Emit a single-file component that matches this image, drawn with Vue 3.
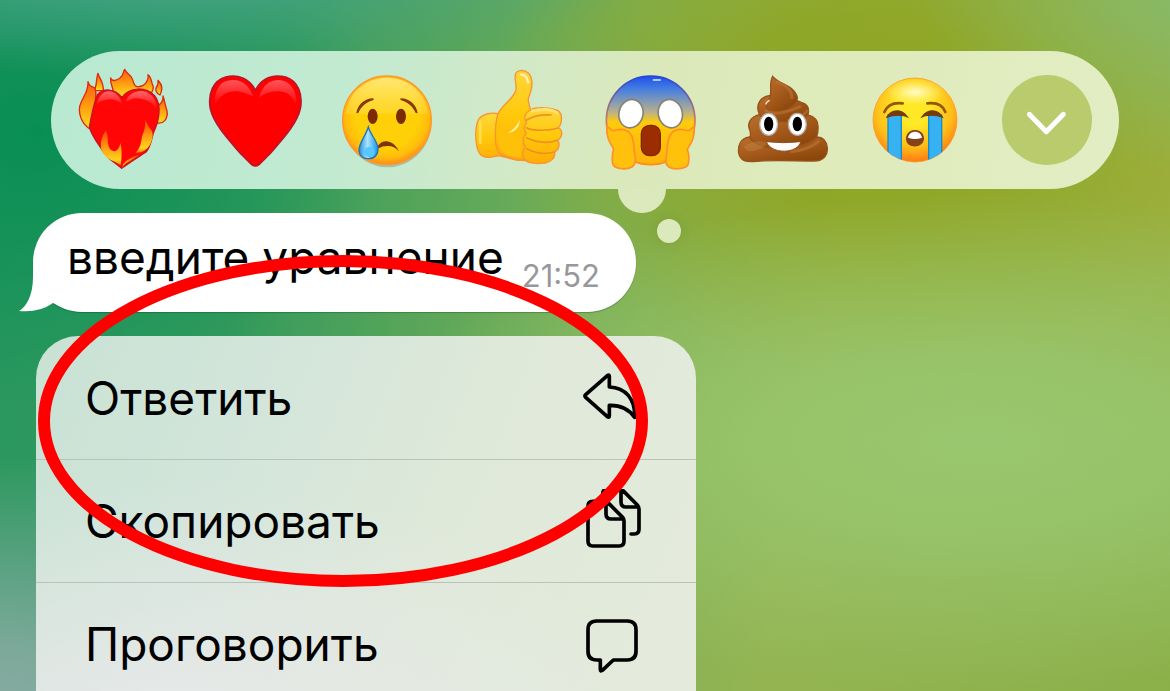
<script setup>
const menu = [
  { id: 'reply', label: 'Ответить' },
  { id: 'copy', label: 'Скопировать' },
  { id: 'speak', label: 'Проговорить' },
]
</script>

<template>
  <main class="chat">
    <div class="reactions" role="toolbar" aria-label="Реакции">
      <button class="reaction" type="button" aria-label="Сердце в огне">
        <svg viewBox="45 60 288 300" aria-hidden="true">
          <defs>
            <linearGradient id="flame" x1="0" y1="0" x2="0" y2="1">
              <stop offset="0" stop-color="#ff5a12" />
              <stop offset=".5" stop-color="#ff9a10" />
              <stop offset="1" stop-color="#ffdf20" />
            </linearGradient>
            <linearGradient id="lowFlame" x1="0" y1="0" x2="0" y2="1">
              <stop offset="0" stop-color="#ff3b08" />
              <stop offset=".45" stop-color="#ff9410" />
              <stop offset=".85" stop-color="#ffd51c" />
              <stop offset="1" stop-color="#ff7a10" />
            </linearGradient>
            <linearGradient id="gloss" x1="0" y1="0" x2="0" y2="1">
              <stop offset="0" stop-color="#ff8c95" />
              <stop offset="1" stop-color="#ff0000" />
            </linearGradient>
          </defs>
          <g fill="url(#flame)" stroke="#dc2a12" stroke-width="4" stroke-linejoin="round">
            <path d="M102 122C112 108 107 88 114 70C117 84 131 95 130 122Z" />
            <path d="M152 84C156 96 169 92 180 84C192 76 188 66 194 58C199 72 212 72 217 87C223 100 220 107 231 110C252 113 267 93 264 74C278 85 272 99 280 110C280 126 269 135 258 140L160 140C165 119 149 104 152 84Z" />
            <path d="M294 91C310 107 307 120 300 135C288 130 285 120 289 112C294 106 296 103 294 91Z" />
            <path d="M309 138C315 154 315 166 321 182C325 207 310 222 293 219L288 170C302 164 311 156 309 138Z" />
            <path d="M84 95C88 112 99 110 104 114C113 128 104 139 107 154L90 237C68 223 55 197 59 169C66 142 86 128 84 95Z" />
          </g>
          <path d="M186 143C164 113 130 115 112 134C103 158 94 196 88 232C98 262 112 278 124 296C136 322 160 334 185 355C204 340 240 318 258 306C272 292 274 270 280 249C295 217 308 168 284 137C257 110 208 109 186 143Z" fill="#ff0505" stroke="#c51522" stroke-width="4" />
          <path d="M111 162C115 132 139 116 160 127C177 135 184 151 186 162C179 153 152 144 135 150C123 152 114 158 111 162ZM197 155C206 128 239 116 263 128C288 141 291 163 290 180C279 151 237 141 218 146Z" fill="url(#gloss)" opacity=".7" />
          <g fill="url(#lowFlame)">
            <path d="M138 240C123 262 118 288 127 306C138 328 163 332 182 346C185 326 187 300 181 279C177 300 166 308 154 301C138 286 148 264 138 240Z" />
            <path d="M254 208C260 236 246 252 245 266C242 288 236 298 227 308C243 310 262 300 271 282C278 268 280 256 276 243C268 236 262 220 254 208Z" />
            <path d="M186 354C192 338 216 332 238 314C222 318 202 326 190 342Z" />
          </g>
        </svg>
      </button>

      <button class="reaction" type="button" aria-label="Сердце">
        <svg viewBox="438 60 288 300" aria-hidden="true">
          <path d="M583 121C565 84 530 73 494 81C456 92 440 131 448 176C458 222 502 268 540 312L572 344Q583 352 594 344L626 312C664 268 708 222 718 176C726 132 711 93 674 81C635 73 602 85 583 121Z" fill="#ff0000" stroke="#b9152d" stroke-width="5" />
          <path d="M462 166C458 119 479 89 516 90C548 90 568 112 576 139C547 125 525 119 503 127C479 135 471 150 462 166ZM594 144C603 105 628 89 655 90C691 94 711 126 704 167C696 141 682 126 655 124C631 121 608 132 594 144Z" fill="url(#gloss)" opacity=".6" />
        </svg>
      </button>

      <button class="reaction" type="button" aria-label="Грусть">
        <svg viewBox="57 60 288 300" aria-hidden="true">
          <defs>
            <radialGradient id="face" cx=".5" cy=".45" r=".55">
              <stop offset=".65" stop-color="#ffd008" />
              <stop offset=".86" stop-color="#ffbc0a" />
              <stop offset="1" stop-color="#ff8a1c" />
            </radialGradient>
            <linearGradient id="shine" x1="0" y1="0" x2="0" y2="1">
              <stop offset="0" stop-color="#fff3a0" />
              <stop offset="1" stop-color="#ffe66c" stop-opacity=".4" />
            </linearGradient>
            <linearGradient id="tear" x1="0" y1="0" x2="1" y2="0">
              <stop offset="0" stop-color="#278ed5" />
              <stop offset=".45" stop-color="#aae4ff" />
              <stop offset="1" stop-color="#1496e8" />
            </linearGradient>
          </defs>
          <ellipse cx="203" cy="219" rx="130" ry="133" fill="#8ba995" opacity=".6" />
          <circle cx="201" cy="211" r="133" fill="url(#face)" stroke="#ff982b" stroke-width="4" />
          <path d="M79 191C83 126 140 83 201 83C263 83 319 127 323 191Z" fill="url(#shine)" opacity=".7" />
          <path d="M109 190C112 166 132 145 160 145L161 150C141 155 124 168 115 189ZM293 190C290 166 270 145 242 145L241 150C261 155 278 168 287 189Z" fill="#8b3907" />
          <ellipse cx="158" cy="199" rx="15" ry="23" fill="#7b2b03" />
          <ellipse cx="243" cy="199" rx="15" ry="23" fill="#7b2b03" />
          <path d="M172 290C188 264 221 269 237 304Q222 287 202 288Q187 288 176 295Z" fill="#813307" />
          <path d="M145 231C138 257 116 279 117 302C119 319 131 327 146 326C164 326 175 313 174 294C172 272 151 254 145 231Z" fill="url(#tear)" stroke="#1c75ba" stroke-width="4" />
          <ellipse cx="148" cy="306" rx="16" ry="15" fill="#55c9ff" />
        </svg>
      </button>

      <button class="reaction" type="button" aria-label="Нравится">
        <svg viewBox="453 60 288 300" aria-hidden="true">
          <defs>
            <linearGradient id="hand" x1="0" y1="0" x2="0" y2="1">
              <stop offset="0" stop-color="#ffd63c" />
              <stop offset=".5" stop-color="#ffc90a" />
              <stop offset="1" stop-color="#ffac07" />
            </linearGradient>
          </defs>
          <g fill="url(#hand)" stroke="#f89432" stroke-width="4" stroke-linejoin="round">
            <path d="M533 191C518 187 489 190 476 208C463 232 465 292 480 312C496 329 518 320 535 317L590 330L643 333L636 215L550 214Z" />
            <path d="M586 75C587 61 610 56 625 69C645 91 633 126 625 145C624 158 628 169 634 184L625 330L591 330C562 318 536 318 532 298C522 276 526 222 532 197C540 168 582 147 588 120C590 103 583 87 586 75Z" />
            <path d="M632 180C651 169 696 173 714 182C730 193 726 224 714 233C730 241 729 262 711 271C721 277 719 298 704 306C707 323 692 337 675 339C649 342 619 342 611 323C604 308 612 297 616 290C604 274 612 257 619 250C607 235 616 223 620 219C608 199 618 187 632 180Z" />
          </g>
          <path d="M534 224C532 262 530 296 560 316L604 322L606 250L560 250Z" fill="#ffc00a" />
          <path d="M620 210Q649 192 693 195M619 233C637 244 690 242 713 234M620 264C647 277 687 282 711 271M620 296C648 311 678 313 704 306" fill="none" stroke="#ed9220" stroke-width="5" stroke-linecap="round" />
          <path d="M637 183Q691 172 711 189" fill="none" stroke="#ffe36e" stroke-width="9" stroke-linecap="round" />
          <path d="M563 248Q585 238 600 209L596 227Q582 250 563 248Z" fill="#fff0a0" />
          <path d="M604 73Q621 75 624 97" fill="none" stroke="#fff1b6" stroke-width="7" stroke-linecap="round" />
          <path d="M481 215L481 278" stroke="#ffdf4f" stroke-width="8" stroke-linecap="round" />
        </svg>
      </button>

      <button class="reaction" type="button" aria-label="Ужас">
        <svg viewBox="39 60 288 300" aria-hidden="true">
          <defs>
            <linearGradient id="scream" x1="0" y1="0" x2="0" y2="1">
              <stop offset="0" stop-color="#1d50ed" />
              <stop offset=".15" stop-color="#477fdf" />
              <stop offset=".4" stop-color="#b5af91" />
              <stop offset=".52" stop-color="#ffcb0c" />
              <stop offset="1" stop-color="#ffb30a" />
            </linearGradient>
            <linearGradient id="screamEdge" x1="0" y1="0" x2="0" y2="1">
              <stop offset="0" stop-color="#2644d8" />
              <stop offset=".55" stop-color="#d88252" />
              <stop offset="1" stop-color="#ff8c17" />
            </linearGradient>
          </defs>
          <circle cx="182" cy="211" r="133" fill="url(#scream)" stroke="url(#screamEdge)" stroke-width="5" />
          <ellipse cx="123" cy="191" rx="36" ry="43" fill="#fff" stroke="#878374" stroke-width="5" transform="rotate(15 123 191)" />
          <ellipse cx="241" cy="191" rx="36" ry="43" fill="#fff" stroke="#878374" stroke-width="5" transform="rotate(-15 241 191)" />
          <rect x="154" y="226" width="57" height="91" rx="25" fill="#9b2d00" stroke="#812700" stroke-width="4" />
          <g fill="#ffc10c" stroke="#ff8f27" stroke-width="5">
            <path d="M51 230C47 258 59 277 71 297C65 312 66 339 70 346C82 358 110 360 127 350C144 336 133 317 133 303C131 269 127 237 91 238C76 240 66 247 59 235Z" />
            <path d="M312 230C316 258 305 278 292 298C299 313 297 339 293 346C280 358 252 360 235 350C220 337 231 317 231 303C233 269 237 237 273 238C288 240 298 247 305 235Z" />
          </g>
          <path d="M190 90H211" stroke="#d4eeff" stroke-width="4" stroke-linecap="round" />
        </svg>
      </button>

      <button class="reaction" type="button" aria-label="Какашка">
        <svg viewBox="435 60 288 300" aria-hidden="true">
          <defs>
            <linearGradient id="brown" x1="0" y1="0" x2=".7" y2="1">
              <stop offset="0" stop-color="#b9702c" />
              <stop offset=".5" stop-color="#a65b1c" />
              <stop offset="1" stop-color="#8a4509" />
            </linearGradient>
          </defs>
          <g fill="url(#brown)" stroke="#96511c" stroke-width="4">
            <path d="M478 261C452 265 443 285 446 309C451 336 473 337 500 334C549 329 611 333 672 333C702 333 714 314 712 293C709 273 698 261 681 261Z" />
            <path d="M508 194C482 200 469 221 480 242C483 253 480 260 481 266C525 312 639 300 680 260C686 243 687 214 674 205C666 197 656 196 649 194Z" />
            <path d="M541 136C511 139 499 163 505 184C509 202 527 212 557 214C602 218 639 211 654 194C660 171 649 160 634 157L619 151Z" />
            <path d="M548 79C565 103 612 104 622 142C624 158 600 178 570 187C540 194 519 174 536 151C550 130 534 103 548 79Z" />
          </g>
          <path d="M558 95Q607 109 606 147M524 181Q555 202 633 169M652 180Q641 204 592 213M688 273Q652 302 601 305" fill="none" stroke="#c17a3d" stroke-width="9" opacity=".5" />
          <path d="M461 290Q499 266 534 278Q509 308 471 302Z" fill="#d29457" opacity=".3" />
          <ellipse cx="536" cy="223" rx="27" ry="33" fill="#fff" stroke="#b4ada8" stroke-width="4" />
          <ellipse cx="622" cy="223" rx="27" ry="33" fill="#fff" stroke="#b4ada8" stroke-width="4" />
          <ellipse cx="536" cy="222" rx="14" ry="22" />
          <ellipse cx="622" cy="222" rx="14" ry="22" />
          <path d="M529 275Q580 281 632 275C625 311 544 315 529 275Z" fill="#fff" stroke="#8f4e20" stroke-width="3" />
          <path d="M527 163Q530 155 539 151" fill="none" stroke="#f2d0ac" stroke-width="5" />
        </svg>
      </button>

      <button class="reaction" type="button" aria-label="Плач">
        <svg viewBox="51 90 288 300" aria-hidden="true">
          <defs>
            <radialGradient id="cry" cx=".48" cy=".36" r=".66">
              <stop offset=".3" stop-color="#ffe926" />
              <stop offset=".7" stop-color="#ffbd18" />
              <stop offset="1" stop-color="#ff7413" />
            </radialGradient>
            <radialGradient id="cryShine">
              <stop offset="0" stop-color="#fffbd0" />
              <stop offset="1" stop-color="#fff27a" stop-opacity="0" />
            </radialGradient>
            <clipPath id="cryClip"><circle cx="195" cy="240" r="126" /></clipPath>
          </defs>
          <circle cx="195" cy="240" r="126" fill="url(#cry)" stroke="#ff8d17" stroke-width="2" />
          <ellipse cx="195" cy="156" rx="92" ry="40" fill="url(#cryShine)" />
          <g clip-path="url(#cryClip)" fill="#36b1f2" stroke="#168acb" stroke-width="4">
            <path d="M114 225H154V370H114ZM236 225H275V370H236Z" />
          </g>
          <path d="M103 216Q116 185 158 190M232 190Q275 185 286 216" fill="none" stroke="#985408" stroke-width="8" stroke-linecap="round" />
          <path d="M107 235C120 204 158 201 177 235C159 225 133 225 107 235ZM211 235C230 201 268 204 281 235C255 225 230 225 211 235Z" fill="#763b09" />
          <path d="M168 294C171 262 219 262 222 294C223 327 166 329 168 294Z" fill="#854118" />
          <path d="M174 293C178 269 212 269 216 293Q195 301 174 293Z" fill="#fff" />
        </svg>
      </button>

      <button class="reaction" type="button" aria-label="Ещё">
        <svg viewBox="447 90 288 300" aria-hidden="true">
          <circle cx="591" cy="240" r="135" fill="#bacb6e" />
          <path d="M538 223L589 275L640 223" fill="none" stroke="#fff" stroke-width="15" stroke-linecap="round" stroke-linejoin="round" />
        </svg>
      </button>
      <span class="drop large"></span>
      <span class="drop small"></span>
    </div>

    <article class="message">
      <svg class="tail" viewBox="0 0 60 50" aria-hidden="true">
        <path d="M14 0V15C14 34 7 45 0 49Q20 51 34 41L60 49V0Z" fill="#fff" />
      </svg>
      <p class="text">введите уравнение</p>
      <time class="time">21:52</time>
    </article>

    <ul class="menu">
      <li v-for="item in menu" :key="item.id" class="entry">
        <button class="action" type="button">
          <span>{{ item.label }}</span>
          <svg v-if="item.id === 'reply'" class="icon" viewBox="96 78 192 192" aria-hidden="true">
            <path d="M173 106Q178 103 178 110V141C226 143 256 176 254 232C235 205 212 195 178 196V227Q178 234 172 230L107 172Q103 168 107 164Z" />
          </svg>
          <svg v-else-if="item.id === 'copy'" class="icon" viewBox="96 447 192 192" aria-hidden="true">
            <path d="M128 484H165Q170 484 174 488L218 532Q222 536 222 543V604Q222 618 208 618H128Q114 618 114 604V498Q114 484 128 484ZM168 488V522Q168 537 183 537H220" />
            <path d="M158 480V462Q158 448 172 448H209Q215 448 219 452L262 495Q267 500 267 507V568Q267 582 253 582H243M213 450V486Q213 501 228 501H265" />
          </svg>
          <svg v-else class="icon" viewBox="96 816 192 192" aria-hidden="true">
            <path d="M140 843H232Q258 843 258 869V934Q258 960 232 960H190L157 991Q151 995 151 988V960H140Q114 960 114 934V869Q114 843 140 843Z" />
          </svg>
        </button>
      </li>
    </ul>

    <svg class="marker" viewBox="0 0 612 334" aria-hidden="true">
      <ellipse cx="306" cy="167" rx="299" ry="160" fill="none" stroke="#ff0000" stroke-width="12" />
    </svg>
  </main>
</template>

<style>
body {
  margin: 0;
}
</style>

<style scoped>
.chat {
  position: relative;
  box-sizing: border-box;
  height: 100vh;
  overflow: hidden;
  padding: 51px 51px 0 33px;
  font-family: Inter, "Liberation Sans", sans-serif;
  color: #000;
  background:
    radial-gradient(ellipse 24% 42% at 0% 108%, #8fada8 0%, rgba(143, 173, 168, 0.8) 35%, transparent 100%),
    radial-gradient(ellipse 52% 36% at 84% 64%, #99c76f 0%, rgba(153, 199, 111, 0.8) 35%, rgba(153, 199, 111, 0) 100%),
    radial-gradient(ellipse 28% 30% at 106% -4%, #85bc72 0%, rgba(133, 188, 114, 0) 100%),
    radial-gradient(ellipse 44% 16% at 12% -5%, #4ba68c 0%, rgba(75, 166, 140, 0) 100%),
    radial-gradient(ellipse 32% 40% at 74% 16%, #8fa522 0%, rgba(143, 165, 34, 0.85) 35%, rgba(143, 165, 34, 0) 100%),
    radial-gradient(ellipse 34% 45% at 102% 24%, #a0b03e 0%, rgba(160, 176, 62, 0) 100%),
    radial-gradient(ellipse 30% 40% at 3% 19%, #088e54 0%, rgba(8, 142, 84, 0) 100%),
    linear-gradient(100deg, #289760 0%, #339a5c 22%, #7bb058 50%, #94b452 68%, #8bb04a 100%);
}

.reactions {
  position: relative;
  display: flex;
  align-items: center;
  justify-content: space-between;
  box-sizing: border-box;
  margin-left: 18px;
  padding: 19px 24px;
  border-radius: 69px;
  background: linear-gradient(100deg, #b8e9d1 0%, #c2ead1 28%, #d1e9c8 42%, #dbe9ba 56%, #dfebbb 75%, #e3edc4 100%);
}

.reaction {
  width: 96px;
  height: 100px;
  padding: 0;
  border: 0;
  background: none;
}

.reaction svg {
  display: block;
  width: 100%;
  height: 100%;
  overflow: visible;
}

.drop {
  position: absolute;
  background: #dce9bd;
}

.drop.large {
  top: 100%;
  left: 567px;
  width: 48px;
  height: 24px;
  border-radius: 0 0 24px 24px;
}

.drop.small {
  top: 168px;
  left: 606px;
  width: 24px;
  height: 24px;
  border-radius: 50%;
  box-shadow: 0 0 12px rgba(60, 90, 20, 0.15);
}

.message {
  position: relative;
  display: flex;
  align-items: center;
  justify-content: space-between;
  box-sizing: border-box;
  width: 603px;
  max-width: 100%;
  height: 99px;
  margin-top: 24px;
  padding: 0 36px 0 34px;
  border-radius: 49px;
  background: #fff;
  box-shadow: 0 1px 1px rgba(0, 50, 20, 0.3);
}

.tail {
  position: absolute;
  left: -14px;
  bottom: 0;
  width: 60px;
  height: 50px;
}

.text {
  position: relative;
  margin: 0;
  padding-bottom: 12px;
  font-size: 46px;
  line-height: 56px;
  white-space: nowrap;
}

.time {
  align-self: flex-end;
  padding-bottom: 16px;
  font-size: 31px;
  line-height: 40px;
  color: #98989c;
}

.menu {
  box-sizing: border-box;
  width: 660px;
  max-width: 100%;
  margin: 24px 0 0 3px;
  padding: 0 0 42px;
  overflow: hidden;
  list-style: none;
  border-radius: 42px;
  background:
    radial-gradient(ellipse 75% 65% at 20% 100%, #e9e9ea 0%, rgba(233, 233, 234, 0) 100%),
    linear-gradient(112deg, #c8e2d4 0%, #d3e5da 30%, #dfe9d9 60%, #e5ebdc 100%);
}

.entry {
  border-bottom: 1px solid #b9c3b9;
}

.action {
  display: flex;
  align-items: center;
  justify-content: space-between;
  box-sizing: border-box;
  width: 100%;
  height: 122px;
  padding: 0 50px 0 49px;
  border: 0;
  background: none;
  font: inherit;
  font-size: 46px;
  line-height: 56px;
  color: #000;
}

.entry:first-child .action {
  height: 123px;
}

.icon {
  width: 64px;
  height: 64px;
  fill: none;
  stroke: #000;
  stroke-width: 11;
  stroke-linecap: round;
  stroke-linejoin: round;
}

.marker {
  position: absolute;
  top: 254px;
  left: 37px;
  width: 612px;
  height: 334px;
  pointer-events: none;
}
</style>
